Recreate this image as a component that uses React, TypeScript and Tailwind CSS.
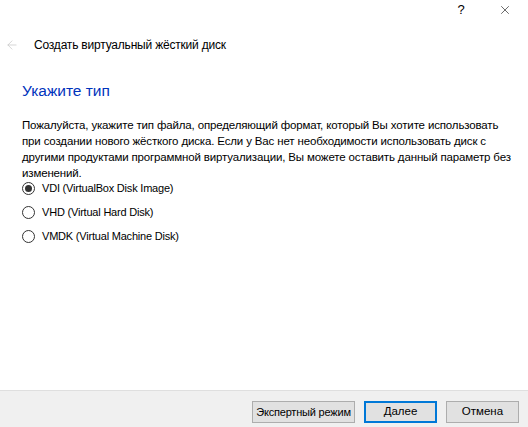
import { ArrowLeft, X } from 'lucide-react'

const options = [
  { id: 'vdi', label: 'VDI (VirtualBox Disk Image)' },
  { id: 'vhd', label: 'VHD (Virtual Hard Disk)' },
  { id: 'vmdk', label: 'VMDK (Virtual Machine Disk)' },
]

export default function App() {
  const selected = 'vdi'

  return (
    <div className="w-[528px] h-[427px] bg-white flex flex-col text-[12px] text-black [font-family:'Liberation_Sans',sans-serif]">
      {/* Title bar */}
      <div className="h-[30px] flex items-start justify-end">
        <span className="w-[46px] h-[20px] flex items-center justify-center text-[13px] -mr-[2px]">?</span>
        <span className="w-[46px] h-[20px] flex items-center justify-center">
          <X size={14} strokeWidth={1} />
        </span>
      </div>

      {/* Wizard header */}
      <div className="h-[31px] flex items-center pl-[5px] -mt-[1px]">
        <ArrowLeft size={14} strokeWidth={1.2} className="text-[#c4c4c4]" />
        <span className="ml-[15px] tracking-[-0.2px]">Создать виртуальный жёсткий диск</span>
      </div>

      <div className="flex-1 pl-[22px] pr-[12px] pt-[21px]">
        <h2 className="text-[15.5px] leading-[20px] text-[#0033bc]">Укажите тип</h2>

        <p className="mt-[16px] text-[11.5px] leading-[16px] tracking-[-0.15px] whitespace-nowrap">
          Пожалуйста, укажите тип файла, определяющий формат, который Вы хотите использовать
          <br />
          при создании нового жёсткого диска. Если у Вас нет необходимости использовать диск с
          <br />
          другими продуктами программной виртуализации, Вы можете оставить данный параметр без
          <br />
          изменений.
        </p>

        <div className="mt-[1px] flex flex-col gap-[11px]">
          {options.map((o) => (
            <label key={o.id} className="h-[13px] flex items-center gap-[7px]">
              <span className="w-[13px] h-[13px] rounded-full border border-[#333] flex items-center justify-center shrink-0">
                {o.id === selected && <span className="w-[7px] h-[7px] rounded-full bg-[#333]" />}
              </span>
              <span className="text-[11px] tracking-[-0.2px]">{o.label}</span>
            </label>
          ))}
        </div>
      </div>

      {/* Footer */}
      <div className="h-[37px] bg-[#f0f0f0] border-t border-[#dfdfdf] flex items-start justify-end pt-[10px] pr-[9px] gap-[9px]">
        <button className="h-[22px] w-[103px] bg-[#e1e1e1] border border-[#adadad] text-[11px] tracking-[-0.2px] leading-none whitespace-nowrap">
          Экспертный режим
        </button>
        <button className="h-[22px] w-[73px] bg-[#e1e1e1] border-2 border-[#0078d7] text-[11.5px] leading-none">
          Далее
        </button>
        <button className="h-[22px] w-[73px] bg-[#e1e1e1] border border-[#adadad] text-[11.5px] leading-none">
          Отмена
        </button>
      </div>
    </div>
  )
}
